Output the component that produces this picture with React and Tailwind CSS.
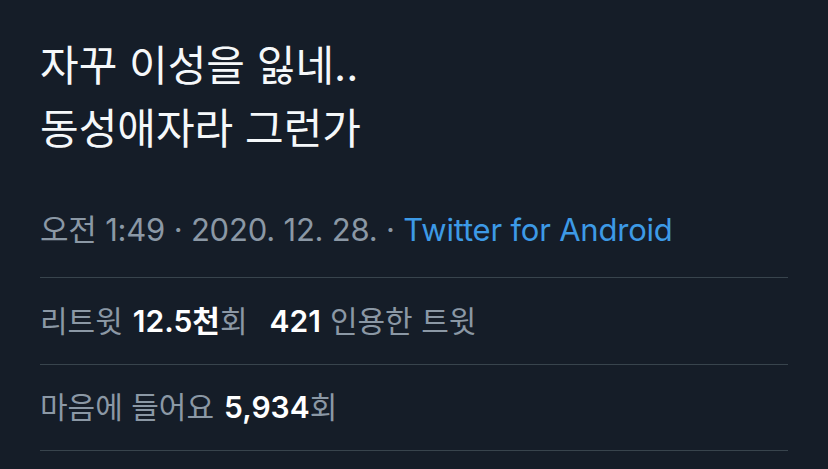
import React from 'react';

const font = { fontFamily: 'Inter, "Noto Sans CJK KR", sans-serif' };

export default function App() {
  return (
    <div className="w-[828px] h-[469px] bg-[#151d28] overflow-hidden" style={font}>
      <div className="px-[40px] pt-[34px]">
        <p className="text-[42px] leading-[63px] text-[#f5f8fa] font-normal">
          자꾸 이성을 잃네..
          <br />
          동성애자라 그런가
        </p>

        <div className="mt-[52px] text-[31px] leading-[36px] tracking-[-0.2px] text-[#8b98a5]">
          오전 1:49 · 2020. 12. 28. · <span className="text-[#3d9ae6]">Twitter for Android</span>
        </div>

        <div className="mt-[29px] border-t border-[#38444d] h-[87px] flex items-center text-[30px] text-[#8b98a5]">
          <span>리트윗</span>
          <span className="ml-[10px] font-semibold text-white">12.5천</span>
          <span>회</span>
          <span className="ml-[22px] font-semibold text-white">421</span>
          <span className="ml-[9px]">인용한 트윗</span>
        </div>

        <div className="border-t border-[#38444d] h-[86px] flex items-center text-[30px] text-[#8b98a5]">
          <span>마음에 들어요</span>
          <span className="ml-[10px] font-semibold text-white">5,934</span>
          <span>회</span>
        </div>

        <div className="border-t border-[#38444d]" />
      </div>
    </div>
  );
}
